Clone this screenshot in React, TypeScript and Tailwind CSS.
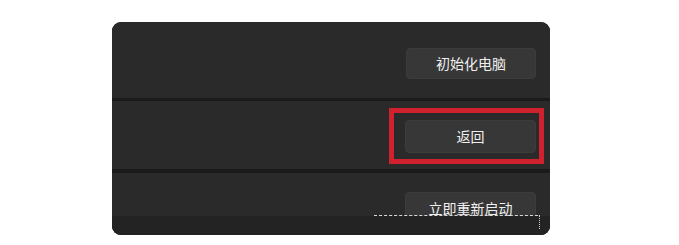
export default function App() {
  return (
    <div className="w-[679px] h-[245px] bg-white pt-[22px] pl-[112px]" style={{ fontFamily: '"Noto Sans CJK SC", "Noto Sans", sans-serif' }}>
      <div className="w-[438px] h-[213px] rounded-[9px] overflow-hidden bg-[#1b1b1b] flex flex-col">
        {/* row 1 */}
        <div className="h-[76px] bg-[#2a2a2a] flex justify-end items-start pt-[26px] pr-[14px]">
          <button className="w-[130px] h-[31px] rounded-[4px] bg-[#373737] border border-[#3c3c3c] text-[14px] text-[#f0f0f0] flex items-center justify-center">
            初始化电脑
          </button>
        </div>
        <div className="h-[3px] mt-[0px]" />
        {/* row 2 */}
        <div className="relative h-[68px] bg-[#2a2a2a] flex justify-end items-start pt-[19px] pr-[14px]">
          <button className="w-[131px] h-[33px] rounded-[4px] bg-[#373737] border border-[#3c3c3c] text-[14px] text-[#f0f0f0] flex items-center justify-center">
            返回
          </button>
          <div className="absolute left-[277px] top-[7px] w-[155px] h-[56px] border-[5px] border-[#d0222e]" />
        </div>
        <div className="h-[4px]" />
        {/* row 3 */}
        <div className="relative flex-1 bg-[#262626] flex flex-col">
          <div className="h-[43px] bg-[#2a2a2a] overflow-hidden flex justify-end items-start pt-[19px] pr-[14px]">
            <button className="shrink-0 w-[131px] h-[32px] rounded-[4px] bg-[#373737] border border-[#3c3c3c] text-[14px] text-[#f0f0f0] flex items-center justify-center">
              立即重新启动
            </button>
          </div>
          <div className="flex-1 bg-[#232323]" />
          <div className="absolute left-[262px] right-[12px] top-[42px] border-t border-dashed border-[#d8d8d8]" />
          <div className="absolute right-[10px] top-[42px] h-[14px] border-l border-dotted border-[#cfcfcf]" />
        </div>
      </div>
    </div>
  );
}
